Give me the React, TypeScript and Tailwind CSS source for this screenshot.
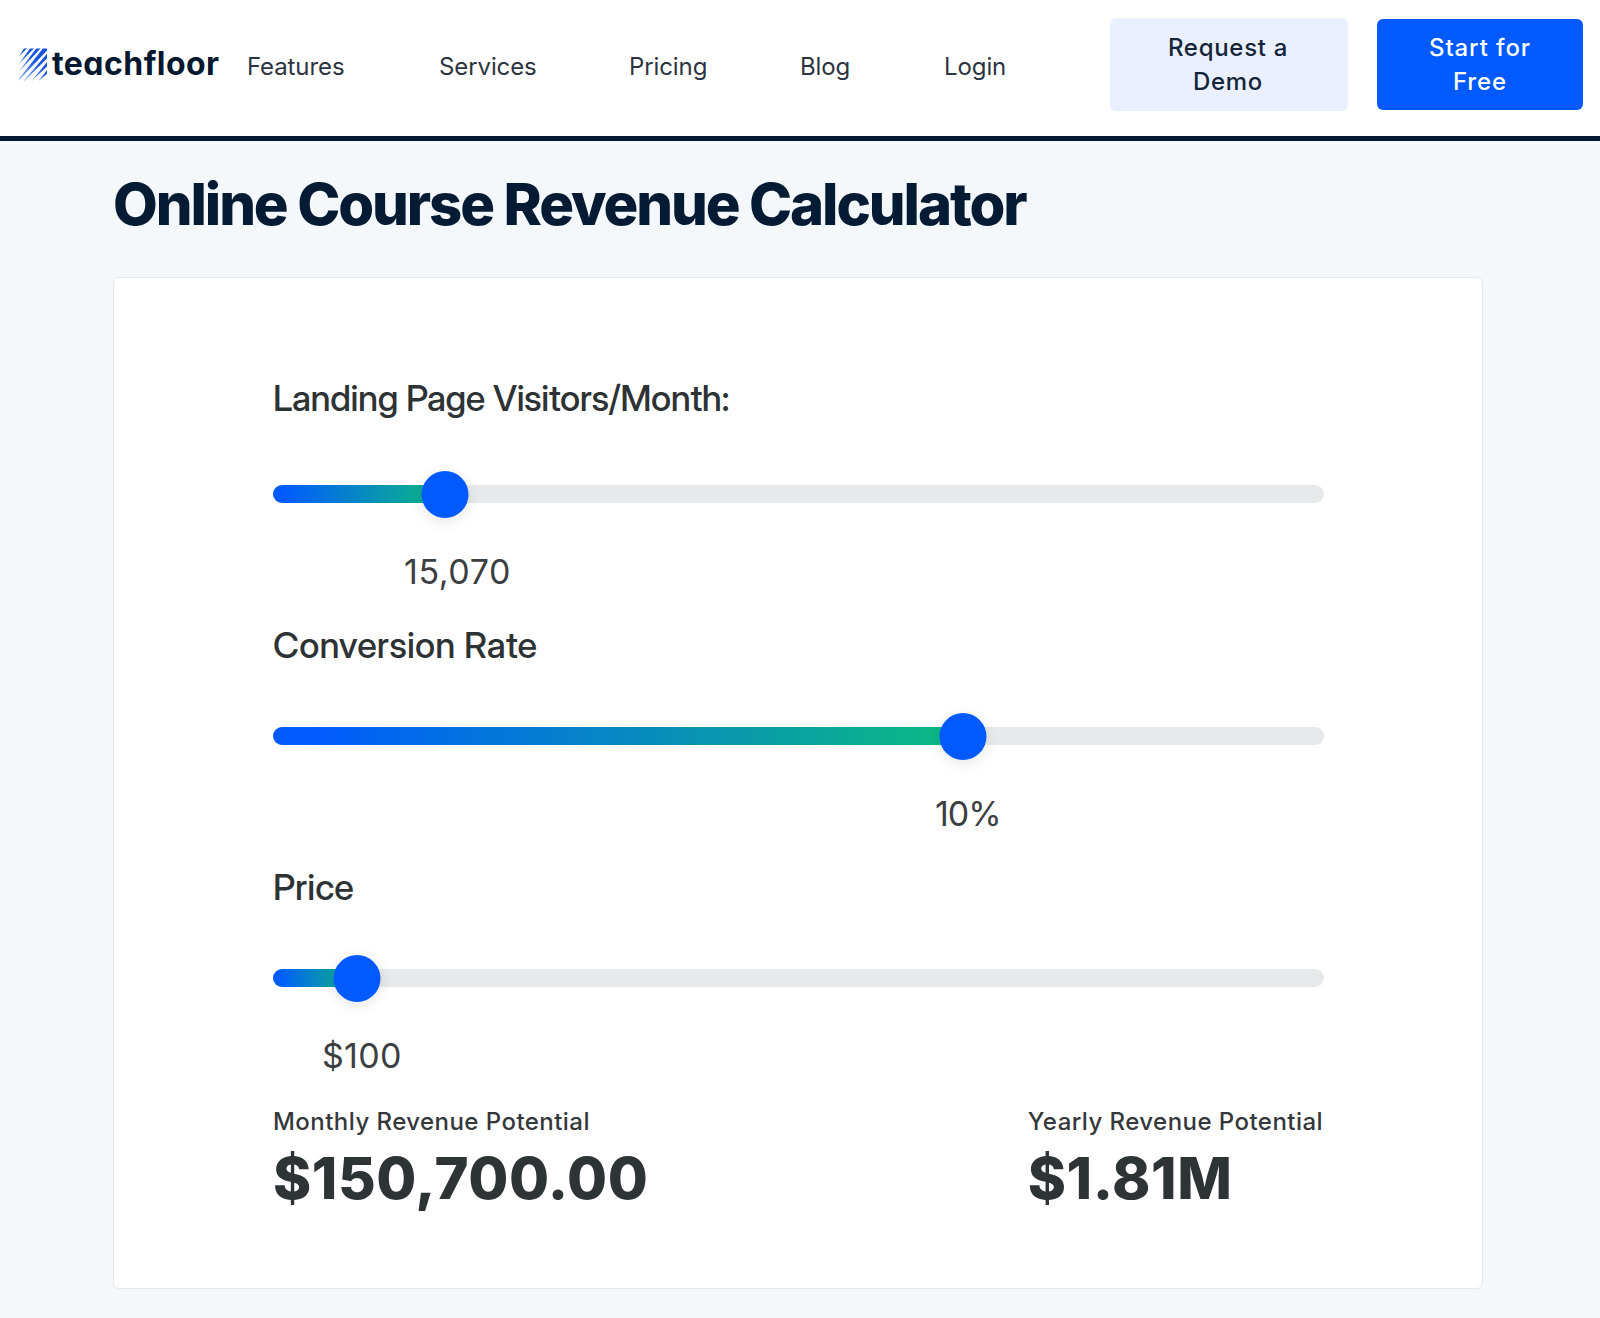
type SliderProps = {
  label: string;
  value: string;
  fill: number;
  valueOffset: number;
  className: string;
  labelClass: string;
  valueClass: string;
};

const navLinks = [
  { name: "Features", className: "w-48" },
  { name: "Services", className: "w-[190px]" },
  { name: "Pricing", className: "w-[171px]" },
  { name: "Blog", className: "w-[144px]" },
  { name: "Login", className: "" },
];

const sliders: SliderProps[] = [
  {
    label: "Landing Page Visitors/Month:",
    value: "15,070",
    fill: 172,
    valueOffset: 131,
    className: "h-[247px]",
    labelClass: "mb-[65px] tracking-[-0.48px]",
    valueClass: "tracking-[0.6px]",
  },
  {
    label: "Conversion Rate",
    value: "10%",
    fill: 690,
    valueOffset: 662,
    className: "h-[242px]",
    labelClass: "mb-[60px] tracking-[0.1px]",
    valueClass: "tracking-[-1px]",
  },
  {
    label: "Price",
    value: "$100",
    fill: 84,
    valueOffset: 49,
    className: "h-[242px]",
    labelClass: "mb-[60px] tracking-normal",
    valueClass: "tracking-[0.3px]",
  },
];

const Logo = () => (
  <a className="flex w-[229px] items-center pl-[18px]">
    <svg width="30" height="34" viewBox="0 0 30 34">
      <defs>
        <linearGradient id="stripes" x1="4" y1="30" x2="18" y2="14" gradientUnits="userSpaceOnUse">
          <stop offset="0" stopColor="#7fa6f2" />
          <stop offset="1" stopColor="#1654da" />
        </linearGradient>
      </defs>
      <g fill="url(#stripes)">
        <path d="M0.8 9.5L6 1.5H9Z" />
        <path d="M0.5 17.5L12 1.5H15.8Z" />
        <path d="M0.5 25L18.2 1.5H22.5Z" />
        <path d="M0.5 32.2L24.8 1.5H29V3.5L1.6 32.4Z" />
        <path d="M5.5 34L29 6.8V11.5L6.5 33.8Z" />
        <path d="M13.5 34L29 15V19.5Z" />
        <path d="M20.5 34L29 23V27Z" />
      </g>
    </svg>
    <span className="ml-1 text-[32px] leading-none font-bold tracking-[0.45px] text-[#04182f] [font-feature-settings:'cv11']">
      teachfloor
    </span>
  </a>
);

const Header = () => (
  <header className="flex h-[141px] items-center border-b-5 border-[#021a33] bg-white pb-2">
    <Logo />
    <nav className="flex flex-1 pt-[5px] pl-[18px] text-[24px] leading-[34px] tracking-[-0.1px] text-[#2b3440]">
      {navLinks.map(({ name, className }) => (
        <a key={name} className={className}>
          {name}
        </a>
      ))}
    </nav>
    <div className="flex items-center gap-[29px] pr-[17px] text-center text-[24px] leading-[34px] font-medium">
      <button className="h-[93px] w-[238px] rounded-md bg-[#eaf0ff] pt-px pr-[49px] pl-[47px] tracking-[0.7px] text-[#14253a]">
        Request a Demo
      </button>
      <button className="h-[91px] w-[206px] rounded-md bg-[#005aff] px-12 pt-px tracking-[0.9px] text-white">
        Start for Free
      </button>
    </div>
  </header>
);

const Slider = ({
  label,
  value,
  fill,
  valueOffset,
  className,
  labelClass,
  valueClass,
}: SliderProps) => (
  <div className={className}>
    <h2
      className={`font-['Inter_Display','Inter',sans-serif] text-[36px] leading-[44px] font-medium text-[#2d3235] ${labelClass}`}
    >
      {label}
    </h2>
    <div className="relative h-[18px] rounded-full bg-[#e7e9ea]">
      <div
        className="h-full rounded-full bg-linear-to-r/srgb from-[#005aff] from-5% to-[#0dbb80]"
        style={{ width: fill }}
      />
      <div
        className="absolute -top-[14px] size-[47px] -translate-x-1/2 rounded-full bg-[#005aff] shadow-[0_3px_14px_rgba(30,30,60,0.12)]"
        style={{ left: fill }}
      />
    </div>
    <p
      className={`mt-[44px] text-[34px] leading-[50px] text-[#3b3f41] ${valueClass}`}
      style={{ paddingLeft: valueOffset }}
    >
      {value}
    </p>
  </div>
);

const Result = ({ label, value }: { label: string; value: string }) => (
  <div>
    <p className="text-[24px] leading-8 font-medium tracking-[0.45px] text-[#34383b]">{label}</p>
    <p className="text-[58px] leading-[80px] font-extrabold tracking-[0.55px] text-[#2e3336]">
      {value}
    </p>
  </div>
);

const App = () => {
  return (
    <div className="h-[1318px] overflow-hidden bg-[#f4f8fb] font-['Inter',sans-serif]">
      <Header />
      <main className="px-[113px]">
        <h1 className="pt-7 text-[58px] leading-[70px] font-extrabold tracking-[-2.1px] text-[#041b33]">
          Online Course Revenue Calculator
        </h1>
        <section className="mt-[38px] h-[1012px] w-[1370px] rounded-md border border-[#e4e9ec] bg-white pt-[98px] pr-[158px] pl-[159px]">
          {sliders.map((slider) => (
            <Slider key={slider.label} {...slider} />
          ))}
          <div className="-mt-px mr-px flex justify-between">
            <Result label="Monthly Revenue Potential" value="$150,700.00" />
            <Result label="Yearly Revenue Potential" value="$1.81M" />
          </div>
        </section>
      </main>
    </div>
  );
};

export default App;
